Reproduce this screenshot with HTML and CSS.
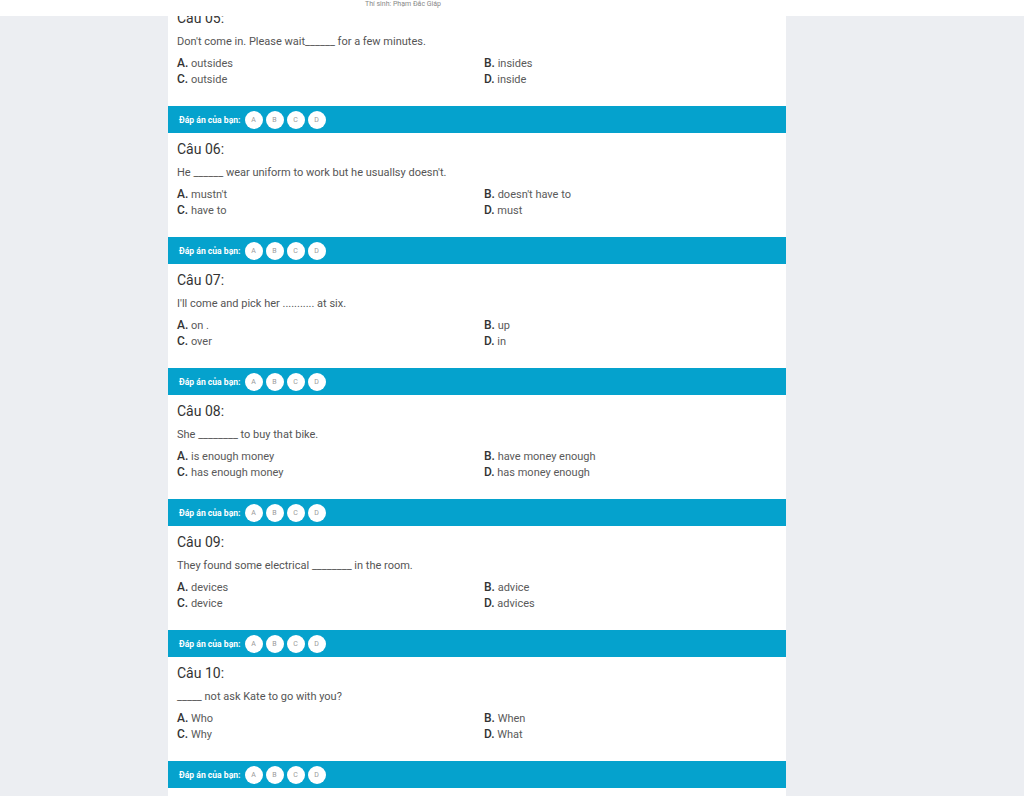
FILE: index.html
```html
<!DOCTYPE html>
<html>
<head>
    <title>Bài thi</title>
    <link rel="stylesheet" href="styles.css">
</head>
<body>

    <!-- Top strip with candidate name -->
    <div class="topbar">Thí sinh: Phạm Đắc Giáp</div>

    <div class="sheet">
        <div class="question">
            <div class="q-title">Câu 05:</div>
            <div class="q-text">Don't come in. Please wait______ for a few minutes.</div>
            <div class="options">
                <div class="opt"><b>A.</b> outsides</div>
                <div class="opt"><b>B.</b> insides</div>
                <div class="opt"><b>C.</b> outside</div>
                <div class="opt"><b>D.</b> inside</div>
            </div>
        </div>
        <div class="answer">
            <span class="answer-label">Đáp án của bạn:</span>
            <span class="choice">A</span><span class="choice">B</span><span class="choice">C</span><span class="choice">D</span>
        </div>

        <div class="question">
            <div class="q-title">Câu 06:</div>
            <div class="q-text">He ______ wear uniform to work but he usuallsy doesn't.</div>
            <div class="options">
                <div class="opt"><b>A.</b> mustn't</div>
                <div class="opt"><b>B.</b> doesn't have to</div>
                <div class="opt"><b>C.</b> have to</div>
                <div class="opt"><b>D.</b> must</div>
            </div>
        </div>
        <div class="answer">
            <span class="answer-label">Đáp án của bạn:</span>
            <span class="choice">A</span><span class="choice">B</span><span class="choice">C</span><span class="choice">D</span>
        </div>

        <div class="question">
            <div class="q-title">Câu 07:</div>
            <div class="q-text">I'll come and pick her ........... at six.</div>
            <div class="options">
                <div class="opt"><b>A.</b> on .</div>
                <div class="opt"><b>B.</b> up</div>
                <div class="opt"><b>C.</b> over</div>
                <div class="opt"><b>D.</b> in</div>
            </div>
        </div>
        <div class="answer">
            <span class="answer-label">Đáp án của bạn:</span>
            <span class="choice">A</span><span class="choice">B</span><span class="choice">C</span><span class="choice">D</span>
        </div>

        <div class="question">
            <div class="q-title">Câu 08:</div>
            <div class="q-text">She ________ to buy that bike.</div>
            <div class="options">
                <div class="opt"><b>A.</b> is enough money</div>
                <div class="opt"><b>B.</b> have money enough</div>
                <div class="opt"><b>C.</b> has enough money</div>
                <div class="opt"><b>D.</b> has money enough</div>
            </div>
        </div>
        <div class="answer">
            <span class="answer-label">Đáp án của bạn:</span>
            <span class="choice">A</span><span class="choice">B</span><span class="choice">C</span><span class="choice">D</span>
        </div>

        <div class="question">
            <div class="q-title">Câu 09:</div>
            <div class="q-text">They found some electrical ________ in the room.</div>
            <div class="options">
                <div class="opt"><b>A.</b> devices</div>
                <div class="opt"><b>B.</b> advice</div>
                <div class="opt"><b>C.</b> device</div>
                <div class="opt"><b>D.</b> advices</div>
            </div>
        </div>
        <div class="answer">
            <span class="answer-label">Đáp án của bạn:</span>
            <span class="choice">A</span><span class="choice">B</span><span class="choice">C</span><span class="choice">D</span>
        </div>

        <div class="question">
            <div class="q-title">Câu 10:</div>
            <div class="q-text">_____ not ask Kate to go with you?</div>
            <div class="options">
                <div class="opt"><b>A.</b> Who</div>
                <div class="opt"><b>B.</b> When</div>
                <div class="opt"><b>C.</b> Why</div>
                <div class="opt"><b>D.</b> What</div>
            </div>
        </div>
        <div class="answer">
            <span class="answer-label">Đáp án của bạn:</span>
            <span class="choice">A</span><span class="choice">B</span><span class="choice">C</span><span class="choice">D</span>
        </div>
        <div class="question"></div>
    </div>

</body>
</html>
```
FILE: styles.css
```css
body { margin: 0; padding: 0; background-color: #eceef2; font-family: Roboto, "Liberation Sans", sans-serif; overflow: hidden; }
.topbar { position: fixed; top: 0; left: 0; right: 0; height: 16px; background: #fff; font-size: 7px; line-height: 9px; color: #888; text-align: center; padding-right: 218px; z-index: 2; }
.sheet { width: 618px; margin: 2px 0 0 168px; background: #fff; }
.question { height: 104px; box-sizing: border-box; padding: 7px 9px 0 9px; }
.q-title { font-size: 14px; line-height: 18px; color: #333; }
.q-text { margin-top: 7px; font-size: 11px; line-height: 16px; color: #555; }
.options { margin-top: 6px; display: grid; grid-template-columns: 307px 1fr; }
.opt { font-size: 11px; line-height: 16px; height: 16px; color: #5a5a5a; }
.opt b { font-size: 12px; line-height: 1; font-weight: 500; color: #333; }
.answer { height: 27px; background: #05a2cd; display: flex; align-items: center; padding-left: 11px; gap: 3px; }
.answer-label { font-size: 8.6px; font-weight: bold; color: #fff; margin-right: 1px; }
.choice { width: 18px; height: 18px; border-radius: 50%; background: #fff; color: #999; font-size: 7px; display: flex; align-items: center; justify-content: center; }
```
